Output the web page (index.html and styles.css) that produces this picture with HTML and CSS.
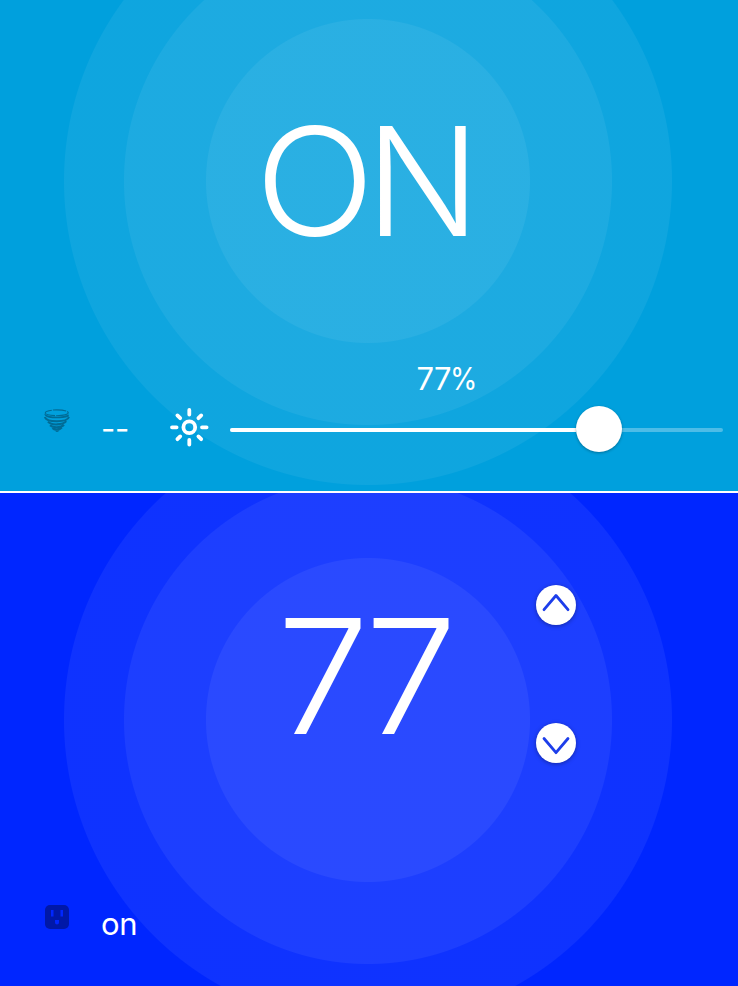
FILE: index.html
```html
<!DOCTYPE html>
<html lang="en">
<head>
<meta charset="utf-8">
<title>Light and temperature</title>
<link rel="stylesheet" href="styles.css">
</head>
<body>
<section class="panel light">
  <div class="rings"></div>
  <div class="state"><span class="wide">O</span><span>N</span></div>
  <div class="controls">
    <svg class="tornado" width="28" height="24" viewBox="0 0 28 24" fill="none" stroke="#006c96">
      <ellipse cx="12.8" cy="3.8" rx="11.5" ry="2.9" stroke-width="1.1" stroke-dasharray="13 1 18 1"/>
      <path d="M.5 4.500C0 7 3.500 8.800 8.500 9.200s11.500.1 16.300-1.800V5.500C20 8 5 9 .5 4.500Z" fill="#006c96" stroke="none"/>
      <path d="M.8 8C3 13.800 23 13.500 25 8" stroke-width="2"/>
      <path d="M4 12.700c3 3.900 15 3.500 18.200-.5M6 16.300c3 2.900 11 2.600 14-.6M8.500 19c2 2.400 7 2 9.300-.5" stroke-width="2.100"/>
      <path d="M10.600 21.200c1.500.8 3.300.7 4.900-.1-1 2.400-3.200 2.500-4.900.1Z" fill="#006c96" stroke="none"/>
    </svg>
    <span class="reading">--</span>
    <svg class="sun" width="40" height="40" viewBox="0 0 40 40" fill="none" stroke="#fff" stroke-width="3.800" stroke-linecap="round">
      <circle cx="20.300" cy="20.300" r="5.900"/>
      <path d="M20.300 3v4.600M20.300 33v4.600M3 20.300h4.600M33 20.300h4.600M8.400 8.400l2.800 2.800M29.400 29.400l2.800 2.800M8.400 32.200l2.800-2.800M29.400 11.200l2.800-2.800"/>
    </svg>
    <div class="slider">
      <span class="percent">77<span class="sign">%</span></span>
      <div class="track"><div class="fill"></div><div class="thumb"></div></div>
    </div>
  </div>
</section>
<section class="panel heat">
  <div class="rings"></div>
  <div class="dial">
    <div class="temperature"><span class="wide">77</span></div>
    <div class="steps">
      <button class="step" aria-label="Increase"><svg width="40" height="40" viewBox="0 0 40 40"><path d="M8 24.700 20 10.500 32 24.700"/></svg></button>
      <button class="step" aria-label="Decrease"><svg width="40" height="40" viewBox="0 0 40 40"><path d="M8 15.500 20 29.700 32 15.500"/></svg></button>
    </div>
  </div>
  <div class="outlet-row">
    <svg width="24" height="24" viewBox="0 0 24 24">
      <rect width="24" height="24" rx="5" fill="#0018a8"/>
      <path d="M6 5h2.500v6.500H6zM15.500 5H18v6.500h-2.500zM10 15h4v2.500a2 2 0 0 1-4 0z" fill="#0026ff"/>
    </svg>
    <span class="reading">on</span>
  </div>
</section>
</body>
</html>
```
FILE: styles.css
```css
* { box-sizing: border-box; }
body {
  margin: 0;
  height: 986px;
  display: grid;
  grid-template-rows: 493px 493px;
  overflow: hidden;
  color: #fff;
  font-family: Inter, "Open Sans", sans-serif;
  font-weight: 300;
}
.panel {
  position: relative;
  overflow: hidden;
  display: flex;
  flex-direction: column;
  isolation: isolate;
}
.light { background: #00a0dd; border-bottom: 2px solid #fff; --cy: 181px; }
.heat { background: #0026ff; --cy: 227px; }
.rings {
  position: absolute;
  inset: 0;
  z-index: -1;
  background:
    radial-gradient(circle at 368px var(--cy), rgb(255 255 255 / .06) 161.500px, transparent 162.500px),
    radial-gradient(circle at 368px var(--cy), rgb(255 255 255 / .06) 243.500px, transparent 244.500px),
    radial-gradient(circle at 368px var(--cy), rgb(255 255 255 / .06) 303.500px, transparent 304.500px);
}
.state, .temperature { white-space: nowrap; }
.wide { display: inline-block; transform-origin: left; }
.state {
  height: 362px;
  padding-left: 255px;
  font-size: 151px;
  line-height: 362px;
  letter-spacing: -10px;
}
.state .wide { transform: scaleX(1.045); margin-right: 6px; }
.controls {
  height: 129px;
  display: grid;
  grid-template-columns: 57px 68px 61px 493px;
  align-items: start;
  padding-left: 44px;
}
.tornado { margin-top: 47px; }
.reading { font-size: 31px; line-height: 40px; font-weight: 370; letter-spacing: -.3px; }
.light .reading { margin-top: 47px; }
.sun { margin-top: 45px; }
.slider { display: flex; flex-direction: column; }
.percent {
  align-self: center;
  width: 62px;
  margin-left: -58px;
  font-size: 31px;
  line-height: 36px;
  font-weight: 370;
  letter-spacing: -.7px;
  margin-top: -1px;
  white-space: nowrap;
}
.sign { display: inline-block; transform: scaleX(.9); transform-origin: left; margin-left: -.5px; }
.track {
  display: flex;
  align-items: center;
  height: 4px;
  margin-top: 31px;
  border-radius: 2px;
  background: rgb(255 255 255 / .3);
}
.fill { width: 346px; height: 4px; border-radius: 2px 0 0 2px; background: #fff; }
.thumb {
  width: 46px;
  height: 46px;
  flex: none;
  margin-top: -2px;
  border-radius: 50%;
  background: #fff;
  box-shadow: 0 1px 3px rgb(0 0 0 / .3);
}
.dial { height: 412px; display: flex; padding-left: 277px; }
.temperature {
  width: 259px;
  font-size: 159px;
  line-height: 367px;
  letter-spacing: -7px;
}
.temperature .wide { transform: scaleX(1.035); }
.steps { display: flex; flex-direction: column; gap: 98px; padding-top: 91.500px; }
.step {
  width: 40px;
  height: 40px;
  padding: 0;
  border: 0;
  border-radius: 50%;
  background: #fff;
  box-shadow: 0 1px 4px rgb(0 0 0 / .35);
}
.step svg { display: block; }
.step path {
  fill: none;
  stroke: #1d3eea;
  stroke-width: 2.800;
  stroke-linecap: round;
  stroke-linejoin: round;
}
.outlet-row { display: flex; gap: 32px; padding-left: 45px; }
.outlet-row .reading { line-height: 38px; }
```
